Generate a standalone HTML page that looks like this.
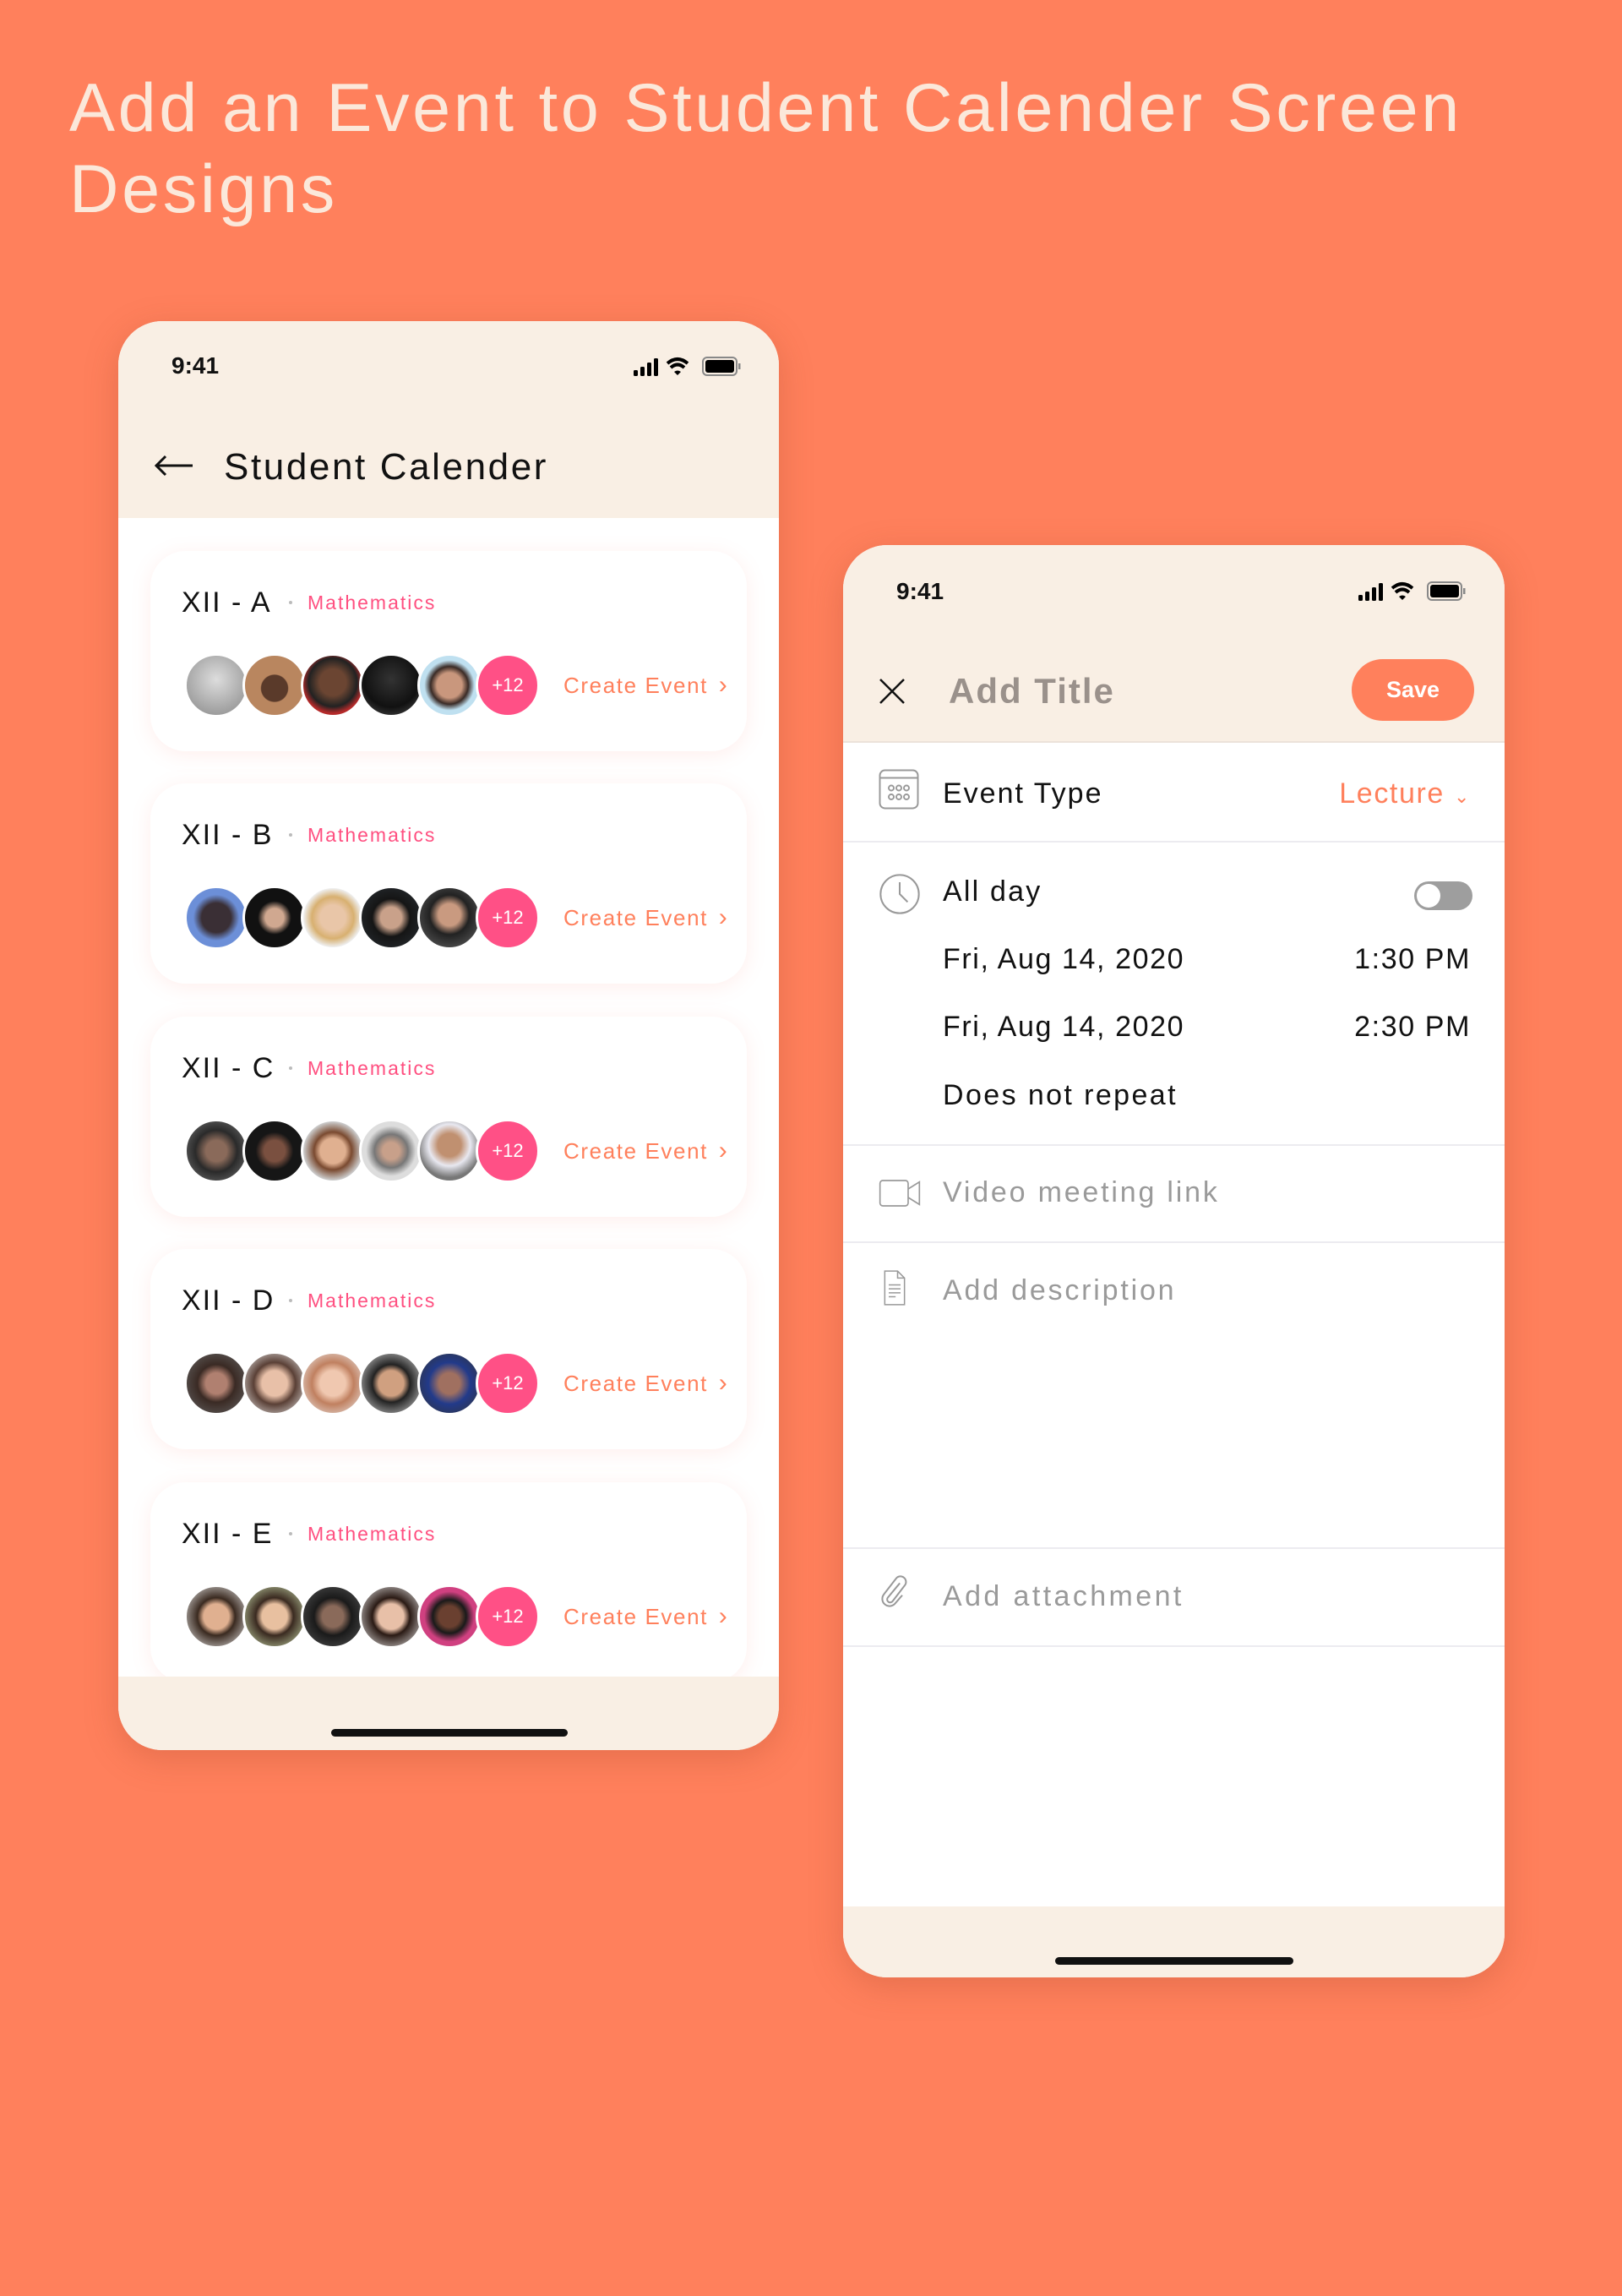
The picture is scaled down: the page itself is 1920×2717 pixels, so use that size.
<!DOCTYPE html>
<html><head><meta charset="utf-8"><style>
*{margin:0;padding:0;box-sizing:border-box}
body{width:1920px;height:2717px;background:#ff805c;font-family:"Liberation Sans",sans-serif;position:relative;overflow:hidden}
.a{position:absolute;white-space:nowrap}
.h1{left:82px;font-size:81px;color:#fbe8da;font-weight:400;letter-spacing:3.6px}
.phone{position:absolute;background:#fff;border-radius:52px;overflow:hidden;box-shadow:0 10px 40px rgba(150,60,30,.25)}
.hdr{position:absolute;left:0;top:0;width:100%;background:#f9efe4}
.foot{position:absolute;left:0;bottom:0;width:100%;background:#f9efe4}
.bar{position:absolute;height:9px;border-radius:5px;background:#111}
.time{font-size:28px;font-weight:700;color:#111;line-height:40px}
.card{position:absolute;left:38px;width:706px;height:237px;background:#fff;border-radius:42px;box-shadow:0 4px 24px rgba(255,120,110,.13)}
.cls{left:37px;top:38px;font-size:34px;color:#111;line-height:46px;letter-spacing:2px}
.dot{left:164px;top:59px;width:4px;height:4px;border-radius:50%;background:#bbb}
.math{left:186px;top:46px;font-size:23px;color:#ff4f80;line-height:30px;letter-spacing:2px}
.av{position:absolute;top:121px;width:76px;height:76px;border-radius:50%;border:3px solid #fff}
.plus{background:#ff5086;color:#fff;font-size:22px;text-align:center;line-height:70px}
.ce{left:489px;top:142px;font-size:26px;color:#ff805c;line-height:34px;letter-spacing:1.6px}
.row{position:absolute;left:0;width:100%;height:2px;background:#ecebf0}
.t{font-size:34px;color:#111;line-height:44px;letter-spacing:1.6px}
.g{color:#9a9a9a;letter-spacing:2.8px}
</style></head><body>
<div class="a h1" style="top:80px;line-height:96px">Add an Event to Student Calender Screen</div>
<div class="a h1" style="top:176px;line-height:96px">Designs</div>

<!-- LEFT PHONE -->
<div class="phone" style="left:140px;top:380px;width:782px;height:1691px">
 <div class="hdr" style="height:233px"></div>
 <div class="a time" style="left:63px;top:33px">9:41</div>
 <svg class="a" style="left:610px;top:40px" width="128" height="30" viewBox="0 0 128 30">
  <rect x="0" y="18" width="5" height="7" rx="1.5"/><rect x="8" y="14" width="5" height="11" rx="1.5"/><rect x="16" y="9" width="5" height="16" rx="1.5"/><rect x="24" y="4" width="5" height="21" rx="1.5"/>
  <path d="M40 10 Q52 0 64 10" stroke="#000" stroke-width="4" fill="none"/><path d="M44 15 Q52 8 60 15" stroke="#000" stroke-width="4" fill="none"/><path d="M48 20 L52 24 L56 20 Q52 17 48 20Z"/>
  <rect x="82" y="3" width="40" height="21" rx="5" fill="none" stroke="#888" stroke-width="2"/><rect x="85" y="6" width="34" height="15" rx="3"/><rect x="124" y="10" width="2.5" height="7" fill="#888"/>
 </svg>
 <svg class="a" style="left:42px;top:158px" width="48" height="26" viewBox="0 0 48 26"><path d="M46 13H3M14 2L3 13l11 11" stroke="#111" stroke-width="3" fill="none"/></svg>
 <div class="a" style="left:125px;top:145px;font-size:44px;color:#111;line-height:56px;font-weight:500;letter-spacing:2.6px">Student Calender</div>

 <div class="card" style="top:272px">
  <div class="a cls">XII - A</div><div class="a dot"></div><div class="a math">Mathematics</div>
  <div class="av" style="left:40px;background:radial-gradient(circle at 50% 40%,#ddd,#888)"></div>
  <div class="av" style="left:109px;background:radial-gradient(circle at 50% 55%,#5a3a2a 30%,#b9865f 32%)"></div>
  <div class="av" style="left:178px;background:radial-gradient(circle at 50% 45%,#6b4532 30%,#222 55%,#b52a2a 70%)"></div>
  <div class="av" style="left:247px;background:radial-gradient(circle at 50% 40%,#333,#111 60%,#555)"></div>
  <div class="av" style="left:316px;background:radial-gradient(circle at 50% 50%,#c9977d 30%,#3a2b26 45%,#bfe0f0 60%)"></div>
  <div class="av plus" style="left:385px">+12</div>
  <div class="a ce">Create Event <span style="font-size:30px;margin-left:4px">›</span></div>
 </div>
 <div class="card" style="top:547px">
  <div class="a cls">XII - B</div><div class="a dot"></div><div class="a math">Mathematics</div>
  <div class="av" style="left:40px;background:radial-gradient(circle,#3a2f35 35%,#6c8fd8 55%)"></div>
  <div class="av" style="left:109px;background:radial-gradient(circle at 50% 50%,#d0a890 22%,#111 40%)"></div>
  <div class="av" style="left:178px;background:radial-gradient(circle,#e9c6a8 30%,#d8b070 50%,#eee 70%)"></div>
  <div class="av" style="left:247px;background:radial-gradient(circle,#c9a18a 25%,#151515 45%,#2a3036)"></div>
  <div class="av" style="left:316px;background:radial-gradient(circle at 50% 45%,#c99a80 25%,#222 45%,#666)"></div>
  <div class="av plus" style="left:385px">+12</div>
  <div class="a ce">Create Event <span style="font-size:30px;margin-left:4px">›</span></div>
 </div>
 <div class="card" style="top:823px">
  <div class="a cls">XII - C</div><div class="a dot"></div><div class="a math">Mathematics</div>
  <div class="av" style="left:40px;background:radial-gradient(circle,#8a6a5a 25%,#2a2a2a 50%,#777)"></div>
  <div class="av" style="left:109px;background:radial-gradient(circle,#7a5040 25%,#161616 45%)"></div>
  <div class="av" style="left:178px;background:radial-gradient(circle,#e0b090 30%,#7a4a30 45%,#ccc 70%)"></div>
  <div class="av" style="left:247px;background:radial-gradient(circle,#c8a08a 20%,#777 40%,#ddd 60%)"></div>
  <div class="av" style="left:316px;background:radial-gradient(circle at 50% 40%,#c09070 25%,#e8e8f0 45%,#777 70%)"></div>
  <div class="av plus" style="left:385px">+12</div>
  <div class="a ce">Create Event <span style="font-size:30px;margin-left:4px">›</span></div>
 </div>
 <div class="card" style="top:1098px">
  <div class="a cls">XII - D</div><div class="a dot"></div><div class="a math">Mathematics</div>
  <div class="av" style="left:40px;background:radial-gradient(circle,#b08070 25%,#3a2a24 45%,#666)"></div>
  <div class="av" style="left:109px;background:radial-gradient(circle,#e8c0a8 30%,#5a4036 50%,#eee)"></div>
  <div class="av" style="left:178px;background:radial-gradient(circle,#f0c8b0 30%,#c08060 50%,#eee)"></div>
  <div class="av" style="left:247px;background:radial-gradient(circle,#d0a080 30%,#222 45%,#ddd)"></div>
  <div class="av" style="left:316px;background:radial-gradient(circle,#a07060 25%,#223a8a 50%,#333)"></div>
  <div class="av plus" style="left:385px">+12</div>
  <div class="a ce">Create Event <span style="font-size:30px;margin-left:4px">›</span></div>
 </div>
 <div class="card" style="top:1374px">
  <div class="a cls">XII - E</div><div class="a dot"></div><div class="a math">Mathematics</div>
  <div class="av" style="left:40px;background:radial-gradient(circle,#e0b090 30%,#3a2a20 45%,#eee)"></div>
  <div class="av" style="left:109px;background:radial-gradient(circle,#e8c0a0 30%,#3a2a20 45%,#cde0b0)"></div>
  <div class="av" style="left:178px;background:radial-gradient(circle,#8a6a5a 25%,#1a1a1a 45%,#555)"></div>
  <div class="av" style="left:247px;background:radial-gradient(circle,#e8c0a8 30%,#2a1a14 45%,#eee)"></div>
  <div class="av" style="left:316px;background:radial-gradient(circle,#6a4030 25%,#1a1a1a 40%,#d04080 60%)"></div>
  <div class="av plus" style="left:385px">+12</div>
  <div class="a ce">Create Event <span style="font-size:30px;margin-left:4px">›</span></div>
 </div>
 <div class="foot" style="height:87px"><div class="bar" style="left:252px;top:62px;width:280px"></div></div>
</div>

<!-- RIGHT PHONE -->
<div class="phone" style="left:998px;top:645px;width:783px;height:1695px">
 <div class="hdr" style="height:234px;border-bottom:2px solid #ece2da"></div>
 <div class="a time" style="left:63px;top:35px">9:41</div>
 <svg class="a" style="left:610px;top:41px" width="128" height="30" viewBox="0 0 128 30">
  <rect x="0" y="18" width="5" height="7" rx="1.5"/><rect x="8" y="14" width="5" height="11" rx="1.5"/><rect x="16" y="9" width="5" height="16" rx="1.5"/><rect x="24" y="4" width="5" height="21" rx="1.5"/>
  <path d="M40 10 Q52 0 64 10" stroke="#000" stroke-width="4" fill="none"/><path d="M44 15 Q52 8 60 15" stroke="#000" stroke-width="4" fill="none"/><path d="M48 20 L52 24 L56 20 Q52 17 48 20Z"/>
  <rect x="82" y="3" width="40" height="21" rx="5" fill="none" stroke="#888" stroke-width="2"/><rect x="85" y="6" width="34" height="15" rx="3"/><rect x="124" y="10" width="2.5" height="7" fill="#888"/>
 </svg>
 <svg class="a" style="left:42px;top:157px" width="32" height="32" viewBox="0 0 32 32"><path d="M2 2L30 30M30 2L2 30" stroke="#111" stroke-width="2.5"/></svg>
 <div class="a" style="left:125px;top:147px;font-size:42px;color:#9a918b;font-weight:700;line-height:52px;letter-spacing:2px">Add Title</div>
 <div class="a" style="left:602px;top:135px;width:145px;height:73px;border-radius:37px;background:#ff805c;color:#fff;font-weight:700;font-size:27px;text-align:center;line-height:73px">Save</div>

 <svg class="a" style="left:42px;top:265px" width="48" height="48" viewBox="0 0 32 32" fill="none" stroke="#999" stroke-width="1.3"><rect x="1" y="1" width="30" height="30" rx="4"/><path d="M1 7H31"/><circle cx="10" cy="15" r="2"/><circle cx="16" cy="15" r="2"/><circle cx="22" cy="15" r="2"/><circle cx="10" cy="22" r="2"/><circle cx="16" cy="22" r="2"/><circle cx="22" cy="22" r="2"/></svg>
 <div class="a t" style="left:118px;top:272px;letter-spacing:2px">Event Type</div>
 <div class="a t" style="right:40px;top:272px;color:#ff805c">Lecture <span style="font-size:22px">⌄</span></div>
 <div class="row" style="top:350px"></div>

 <svg class="a" style="left:42px;top:388px" width="50" height="50" viewBox="0 0 32 32" fill="none" stroke="#999" stroke-width="1.3"><circle cx="16" cy="16" r="14.5"/><path d="M16 7V16L22 22"/></svg>
 <div class="a t" style="left:118px;top:388px;letter-spacing:2.2px">All day</div>
 <div class="a" style="left:676px;top:398px;width:69px;height:34px;border-radius:17px;background:#9e9e9e"><div style="position:absolute;left:3px;top:3px;width:28px;height:28px;border-radius:50%;background:#fff"></div></div>
 <div class="a t" style="left:118px;top:468px">Fri, Aug 14, 2020</div>
 <div class="a t" style="right:40px;top:468px">1:30 PM</div>
 <div class="a t" style="left:118px;top:548px">Fri, Aug 14, 2020</div>
 <div class="a t" style="right:40px;top:548px">2:30 PM</div>
 <div class="a t" style="left:118px;top:629px;letter-spacing:2.4px">Does not repeat</div>
 <div class="row" style="top:709px"></div>

 <svg class="a" style="left:42px;top:750px" width="50" height="34" viewBox="0 0 30 20" fill="none" stroke="#999" stroke-width="1"><rect x="1" y="1" width="20" height="18" rx="2"/><path d="M21 7L29 2V18L21 13"/></svg>
 <div class="a t g" style="left:118px;top:744px">Video meeting link</div>
 <div class="row" style="top:824px"></div>

 <svg class="a" style="left:48px;top:858px" width="26" height="42" viewBox="0 0 22 36" fill="none" stroke="#999" stroke-width="1.3"><path d="M1 1H14L21 8V35H1Z M14 1V8H21 M5 15H17M5 19H17M5 23H17M5 27H12"/></svg>
 <div class="a t g" style="left:118px;top:860px">Add description</div>
 <div class="row" style="top:1186px"></div>

 <svg class="a" style="left:42px;top:1217px" width="36" height="40" viewBox="0 0 24 28" fill="none" stroke="#999" stroke-width="1.4"><path d="M17 8L7 20a2.5 2.5 0 0 0 4 3L21 10a4.5 4.5 0 0 0-7-6L4 17a6 6 0 0 0 9 8l6-7"/></svg>
 <div class="a t g" style="left:118px;top:1222px;letter-spacing:3.4px">Add attachment</div>
 <div class="row" style="top:1302px"></div>

 <div class="foot" style="height:84px"><div class="bar" style="left:251px;top:60px;width:282px"></div></div>
</div>
</body></html>
